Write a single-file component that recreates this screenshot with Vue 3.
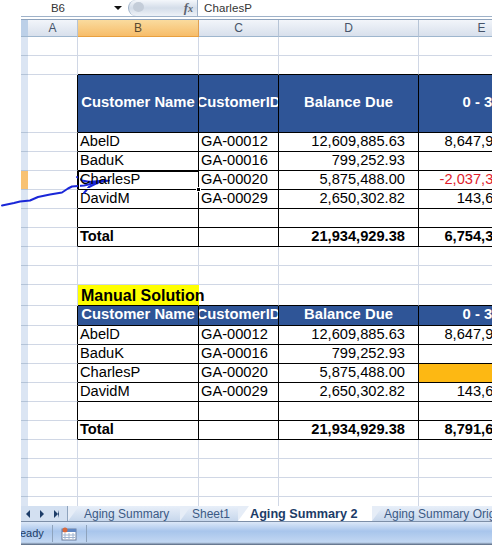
<template>
  <div class="window">
    <div class="formula-bar">
      <div class="name-box">B6</div>
      <span class="name-arrow"></span>
      <div class="fx-pill">
        <span class="pill-knob"></span>
        <span class="fx">f<i>x</i></span>
      </div>
      <div class="formula-text">CharlesP</div>
    </div>

    <div class="sheet">
      <div class="col-heads">
        <div class="corner"></div>
        <div
          v-for="col in columns"
          :key="col.name"
          class="col-head"
          :class="{ active: col.name === 'B' }"
          :style="{ width: col.width + 'px' }"
        >{{ col.name }}</div>
      </div>

      <div
        v-for="(row, i) in rows"
        :key="i"
        class="row"
        :style="{ height: row.h + 'px' }"
      >
        <div class="row-head" :class="{ active: row.active }"></div>
        <div
          v-for="(col, c) in columns"
          :key="col.name"
          class="cell"
          :class="cellClass(row, c)"
          :style="{ width: col.width + 'px' }"
        >
          <span v-if="c > 0 && row.cells">{{ row.cells[c - 1] }}</span>
          <span v-if="row.title && c === 1" class="title-text">Manual Solution</span>
          <div v-if="row.active && c === 1" class="selection"><i class="handle"></i></div>
        </div>
      </div>
    </div>

    <div class="tabs">
      <div class="nav">
        <span class="tri first"></span>
        <span class="tri next"></span>
        <span class="tri last"></span>
      </div>
      <div
        v-for="(tab, i) in tabs"
        :key="tab.name"
        class="tab"
        :class="{ current: tab.current, lead: i === 0 }"
        :style="{ width: tab.width + 'px' }"
      >{{ tab.name }}</div>
    </div>

    <div class="status">
      <span class="ready">Ready</span>
      <div class="macro-box">
        <svg width="16" height="14" viewBox="0 0 16 14">
          <rect x="1" y="2" width="14" height="11" fill="#fff" stroke="#6d7f9e" />
          <rect x="1" y="2" width="14" height="3" fill="#5f86c2" />
          <path d="M4 6v6M8 6v6M12 6v6M2 8h12M2 10.500h12" stroke="#9fb3cf" />
          <circle cx="4" cy="3" r="2.500" fill="#d9693c" />
        </svg>
      </div>
    </div>

    <!-- hand drawn arrow, it runs from the white margin over the cells -->
    <svg class="scribble" width="130" height="60" viewBox="0 165 130 60">
      <path d="M2 205.500 L14 203 L20 201.500 L30 200.500 L38 197 L50 194.500 L62 192.500 L68 188.500 L72 186.500 L84 185.500 L97 182.500 L109 180.500" />
      <path d="M77 177 L82 180.500 L90 182 L97 183.500 M84 193 L89 187 L94 184.500 L100 181.500 M88 182 L106 180.500" />
    </svg>
  </div>
</template>

<script setup>
const columns = [
  { name: 'A', width: 50 },
  { name: 'B', width: 121 },
  { name: 'C', width: 80 },
  { name: 'D', width: 140 },
  { name: 'E', width: 126 },
]

const head = ['Customer Name', 'CustomerID', 'Balance Due', '0 - 30']
const blank = ['', '', '', '']

// kind: head / data / total mean black borders, above means black bottom line only
const rows = [
  { h: 19 },
  { h: 19, above: true },
  { h: 58, kind: 'head', cells: head },
  { h: 19, kind: 'data', cells: ['AbelD', 'GA-00012', '12,609,885.63', '8,647,916.48'] },
  { h: 19, kind: 'data', cells: ['BaduK', 'GA-00016', '799,252.93', ''] },
  { h: 19, kind: 'data', active: true, neg: true, cells: ['CharlesP', 'GA-00020', '5,875,488.00', '-2,037,312.00'] },
  { h: 19, kind: 'data', cells: ['DavidM', 'GA-00029', '2,650,302.82', '143,675.40'] },
  { h: 19, kind: 'data', cells: blank },
  { h: 19, kind: 'total', cells: ['Total', '', '21,934,929.38', '6,754,319.88'] },
  { h: 19 },
  { h: 19 },
  { h: 21, title: true, above: true },
  { h: 20, kind: 'head', cells: head },
  { h: 19, kind: 'data', cells: ['AbelD', 'GA-00012', '12,609,885.63', '8,647,916.48'] },
  { h: 19, kind: 'data', cells: ['BaduK', 'GA-00016', '799,252.93', ''] },
  { h: 19, kind: 'data', orange: true, cells: ['CharlesP', 'GA-00020', '5,875,488.00', ''] },
  { h: 19, kind: 'data', cells: ['DavidM', 'GA-00029', '2,650,302.82', '143,675.40'] },
  { h: 19, kind: 'data', cells: blank },
  { h: 19, kind: 'total', cells: ['Total', '', '21,934,929.38', '8,791,631.88'] },
  { h: 19 },
  { h: 19 },
  { h: 19 },
  { h: 10 },
]

const tabs = [
  { name: 'Aging Summary', width: 112 },
  { name: 'Sheet1', width: 58 },
  { name: 'Aging Summary 2', width: 134, current: true },
  { name: 'Aging Summary Original', width: 170 },
]

function cellClass(row, c) {
  if (c === 0) return { edge: !!row.kind }
  const list = []
  if (row.kind) list.push('boxed', 'is-' + row.kind)
  if (row.above) list.push('above')
  if (row.title && c === 1) list.push('yellow')
  if (row.kind !== 'head') {
    if (c === 1) list.push('name')
    if (c === 2) list.push('code')
    if (c === 3) list.push('num')
    if (c === 4) list.push('num', 'last')
  }
  if (c === 4 && row.neg) list.push('neg')
  if (c === 4 && row.orange) list.push('orange')
  return list
}
</script>

<style>
html,
body {
  margin: 0;
  background: #fff;
  overflow: hidden;
}
</style>

<style scoped>
.window {
  position: relative;
  width: 492px;
  height: 545px;
  padding-left: 21px;
  box-sizing: border-box;
  display: flex;
  flex-direction: column;
  overflow: hidden;
  font-family: "Liberation Sans", Arial, sans-serif;
  color: #000;
  background: #fff;
}

.formula-bar {
  height: 16px;
  flex: none;
  display: flex;
  align-items: center;
  border-bottom: 1px solid #9fb2c9;
  font-size: 11.5px;
  color: #333;
}
.name-box {
  width: 74px;
  text-align: center;
}
.name-arrow {
  width: 0;
  height: 0;
  margin-left: 19px;
  border: 4px solid transparent;
  border-top: 4px solid #111;
  border-bottom: 0;
}
.fx-pill {
  position: relative;
  width: 70px;
  height: 16px;
  margin-left: 6px;
  border-radius: 8px 0 0 8px;
  background: linear-gradient(#f4f7fb, #d4dde9 50%, #eef2f7);
  border-left: 1px solid #9fb2c9;
  border-right: 1px solid #9fb2c9;
  display: flex;
  justify-content: flex-end;
  align-items: center;
  padding-right: 4px;
  box-sizing: border-box;
}
.pill-knob {
  position: absolute;
  left: 4px;
  top: 2px;
  width: 11px;
  height: 10px;
  border-radius: 50%;
  background: #c4cdd9;
}
.fx {
  font-family: "Liberation Serif", serif;
  font-style: italic;
  font-weight: bold;
  font-size: 13px;
  color: #5c6470;
}
.fx i {
  font-size: 10px;
}
.formula-text {
  margin-left: 6px;
  letter-spacing: 0.1px;
}

.sheet {
  flex: 1;
  min-height: 0;
  margin-top: 2px;
  overflow: hidden;
  border-top: 1px solid #8ea3bd;
}

.col-heads {
  display: flex;
  height: 17px;
}
.corner {
  width: 7px;
  flex: none;
  background: #bcd0e8;
  border-bottom: 1px solid #9eb6ce;
  box-sizing: border-box;
}
.col-head {
  flex: none;
  box-sizing: border-box;
  background: linear-gradient(#f2f5fa, #d8e0ec);
  border-right: 1px solid #b6c4d6;
  border-bottom: 1px solid #9eb6ce;
  text-align: center;
  font-size: 12px;
  line-height: 16px;
  color: #46546a;
}
.col-head.active {
  background: linear-gradient(#fadb9e, #f7bd6a);
  border-right-color: #e0a050;
  border-bottom-color: #e8a040;
  color: #5a4a30;
}

.row {
  display: flex;
}
.row-head {
  width: 7px;
  flex: none;
  box-sizing: border-box;
  background: #dbe5f3;
  border-bottom: 1px solid #b4c4d8;
}
.row-head.active {
  background: #f8c273;
}

.cell {
  position: relative;
  flex: none;
  box-sizing: border-box;
  display: flex;
  align-items: flex-end;
  white-space: nowrap;
  overflow: hidden;
  padding-bottom: 1px;
  border-right: 1px solid #d0d7e5;
  border-bottom: 1px solid #d0d7e5;
  font-size: 14.67px;
  line-height: 17px;
}
.cell.edge,
.cell.boxed {
  border-right-color: #000;
}
.cell.boxed,
.cell.above {
  border-bottom-color: #000;
}
.cell.name,
.cell.code {
  padding-left: 2px;
}
.cell.num {
  justify-content: flex-end;
  padding-right: 13px;
}
.cell.num.last {
  padding-right: 14px;
}
.cell.neg {
  color: #e01b2c;
}
.cell.orange {
  background: #fdb813;
}
.cell.is-head {
  background: #2f5597;
  color: #fff;
  font-size: 14.8px;
  font-weight: bold;
  align-items: center;
  justify-content: center;
  padding-bottom: 2px;
}
.cell.is-total {
  font-weight: bold;
}
.cell.yellow {
  background: #ffff00;
  border-right-color: #ffff00;
  overflow: visible;
  padding-bottom: 0;
  z-index: 1;
}
.title-text {
  font-size: 16px;
  line-height: 19px;
  font-weight: bold;
  padding-left: 1px;
}

.selection {
  position: absolute;
  inset: 0 -1px -1px 0;
  border: 1px solid #000;
  box-shadow: inset 0 0 0 1px #fff;
}
.cell:has(.selection) {
  overflow: visible;
  z-index: 2;
}
.handle {
  position: absolute;
  right: -3px;
  bottom: -3px;
  width: 3px;
  height: 3px;
  background: #000;
  border: 1px solid #fff;
}

.scribble {
  position: absolute;
  left: 0;
  top: 165px;
  fill: none;
  stroke: #1a27d8;
  stroke-width: 2;
  stroke-linejoin: round;
  stroke-linecap: round;
}

.tabs {
  height: 16px;
  flex: none;
  display: flex;
  overflow: hidden;
  background: #e6edf7;
  border-bottom: 1px solid #7d8fa8;
  box-sizing: border-box;
  font-size: 12px;
  color: #3b5a85;
}
.nav {
  width: 47px;
  flex: none;
  display: flex;
  align-items: center;
  padding-left: 5px;
  box-sizing: border-box;
  border-right: 1px solid #8ea3bd;
  background: #d3e0f1;
}
.tri {
  width: 0;
  height: 0;
  border-style: solid;
  border-color: transparent;
  border-width: 4px 0;
}
.tri.first {
  border-right: 4px solid #1c3c68;
}
.tri.next {
  margin-left: 10px;
  border-left: 4px solid #1c3c68;
}
.tri.last {
  margin-left: 10px;
  border-left: 4px solid #1c3c68;
  border-right: 1px solid #1c3c68;
}
.tab {
  flex: none;
  box-sizing: border-box;
  padding: 1px 0 0 12px;
  line-height: 15px;
  white-space: nowrap;
  background: linear-gradient(#e8eff9, #c7d7ec);
  clip-path: polygon(0 100%, 11px 0, 100% 0, 100% 100%);
}
.tab.lead {
  padding-left: 16px;
}
.tab.current {
  background: #fff;
  font-weight: bold;
  color: #1c3c68;
  font-size: 12.67px;
}

.status {
  height: 23px;
  flex: none;
  display: flex;
  align-items: center;
  background: linear-gradient(#dce8f8, #a8c5ec 40%, #c2d7f2 88%, #55657c);
  font-size: 11px;
  color: #1c3c68;
  overflow: hidden;
}
.ready {
  width: 31px;
  margin-left: -9px;
  padding-right: 9px;
  flex: none;
  text-align: right;
  border-right: 1px solid #8ea3bd;
  height: 17px;
  line-height: 17px;
}
.macro-box {
  display: flex;
  align-items: center;
  height: 17px;
  padding: 0 9px 0 8px;
  border-right: 1px solid #8ea3bd;
}
</style>
